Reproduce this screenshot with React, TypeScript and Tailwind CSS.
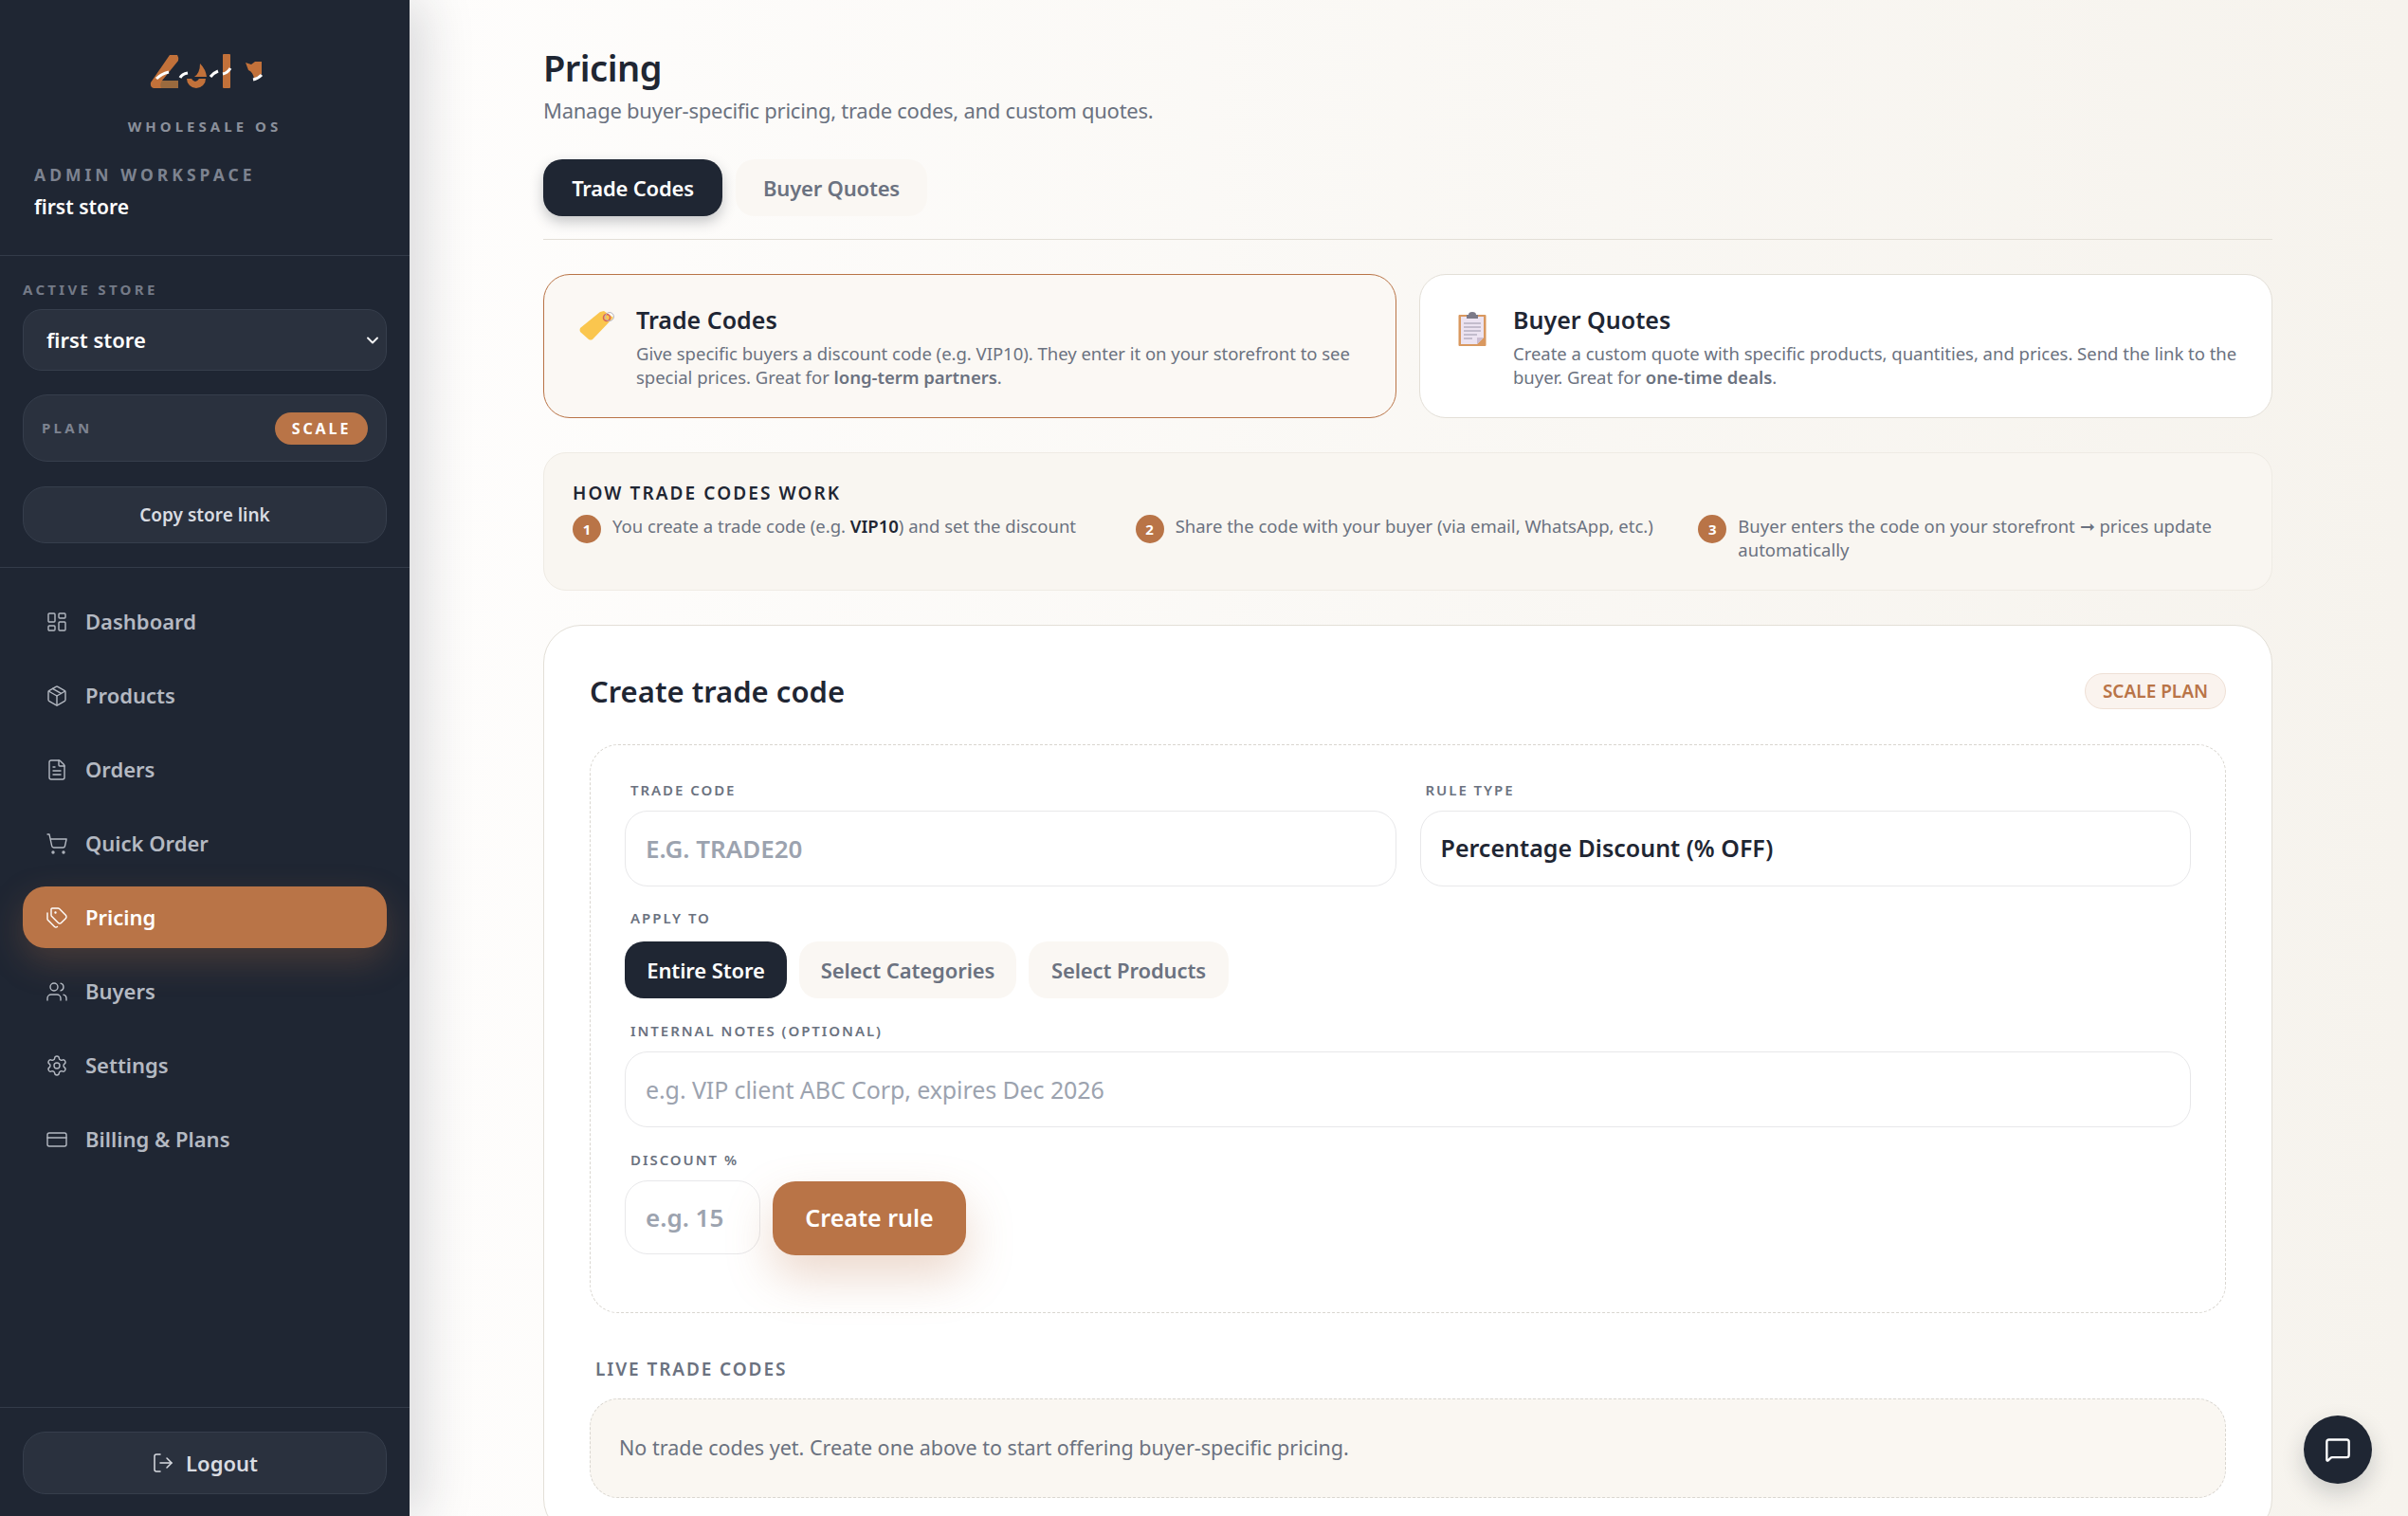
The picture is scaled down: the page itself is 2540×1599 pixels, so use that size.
import React from "react";
import {
  ChevronDown,
  CreditCard,
  FileText,
  LayoutDashboard,
  LogOut,
  MessageSquare,
  Package,
  Settings,
  ShoppingCart,
  Tags,
  Users,
} from "lucide-react";

const font = "font-['Noto_Sans','Open_Sans',sans-serif]";

const navItems = [
  { label: "Dashboard", icon: LayoutDashboard },
  { label: "Products", icon: Package },
  { label: "Orders", icon: FileText },
  { label: "Quick Order", icon: ShoppingCart },
  { label: "Pricing", icon: Tags, active: true },
  { label: "Buyers", icon: Users },
  { label: "Settings", icon: Settings },
  { label: "Billing & Plans", icon: CreditCard },
];

const Logo = () => (
  <svg width="170" height="70" viewBox="0 0 170 70" className="mt-[39px]">
    <path
      d="M47 19 L55 19 Q57 22 56 25 L39 46 L56 46 L56 54 L30 54 Q26 53 27 48 Z"
      fill="#c2713a"
    />
    <path d="M39 46 L56 46 L56 54 L38 54 Q36 50 39 46 Z" fill="#9a6a3e" />
    <path d="M33 44 Q38 39 46 37" stroke="#fff" strokeWidth="3" fill="none" />
    <path d="M58 43 Q60 39 66 38" stroke="#fff" strokeWidth="3" fill="none" />
    <path
      d="M65 44 A10 10 0 0 0 85 44 L78 44 Q74 50 70 44 Z M73 42 Q79 38 79 28 Q85 34 86 42 Z"
      fill="#c2713a"
    />
    <path d="M90 42 Q93 38 98 36" stroke="#fff" strokeWidth="3" fill="none" />
    <rect x="103" y="18" width="8" height="36" rx="1" fill="#c2713a" />
    <path d="M103 39 Q108 38 111 33" stroke="#fff" strokeWidth="3" fill="none" />
    <path
      d="M127 27 L133 29 L137 26 L144 26 L144 39 L136 44 Q135 37 130 35 Z"
      fill="#c2713a"
    />
    <path d="M135 45 Q140 44 144 40" stroke="#fff" strokeWidth="3" fill="none" />
  </svg>
);

const TagEmoji = () => (
  <svg width="40" height="32" viewBox="0 0 40 32" className="shrink-0 mt-[-2px]">
    <path
      d="M26 1 L36 8 L14 31 Q12 32 10 31 L1 23 Q0 21 1 19 L22 2 Z"
      fill="#fac64e"
    />
    <circle cx="29" cy="8" r="3.5" fill="none" stroke="#d4605f" strokeWidth="1.5" />
    <circle cx="32" cy="7" r="4.5" fill="none" stroke="#b8b8c4" strokeWidth="1" />
  </svg>
);

const ClipboardEmoji = () => (
  <svg width="30" height="36" viewBox="0 0 30 36" className="shrink-0">
    <rect x="0.5" y="3" width="29" height="33" rx="1" fill="#d9985f" />
    <path d="M3 5 H27 V27 L20 34 H3 Z" fill="#ece3f1" />
    <path d="M20 34 L27 27 H20 Z" fill="#cbbdd2" />
    <path d="M11 3 Q11 0 15 0 Q19 0 19 3 L21 3 L21 7 L9 7 L9 3 Z" fill="#7c7a88" />
    <path
      d="M6 12 H24 M6 16 H24 M6 20 H24 M6 24 H20 M6 28 H15"
      stroke="#9a95a8"
      strokeWidth="1"
    />
  </svg>
);

const Label = ({ children, className = "" }: { children: React.ReactNode; className?: string }) => (
  <div
    className={`h-[20px] pl-[6px] text-[15px] leading-[20px] font-semibold tracking-[0.13em] text-[#6b7280] ${className}`}
  >
    {children}
  </div>
);

const Step = ({ n, children }: { n: number; children: React.ReactNode }) => (
  <div className="flex items-start gap-[12px]">
    <span className="flex h-[30px] w-[30px] shrink-0 items-center justify-center rounded-full bg-[#b97447] text-[15px] font-bold text-white">
      {n}
    </span>
    <p className="text-[18.5px] leading-[24.5px] text-[#6b7280]">{children}</p>
  </div>
);

const Sidebar = () => (
  <aside className="relative z-10 flex h-full w-[432px] shrink-0 flex-col bg-[#1f2633] shadow-[14px_0_50px_rgba(31,38,51,0.17)]">
    <div className="h-[270px] shrink-0 border-b border-[#333b49]">
      <div className="flex flex-col items-center">
        <div className="h-[123px] pl-[2px]">
          <Logo />
        </div>
        <div className="text-[15px] leading-[20px] font-bold tracking-[0.27em] text-[#8b909b]">
          WHOLESALE OS
        </div>
      </div>
      <div className="mt-[30px] pl-[36px] text-[17.5px] leading-[22px] font-bold tracking-[0.23em] text-[#7d8390]">
        ADMIN WORKSPACE
      </div>
      <div className="mt-[11px] pl-[36px] text-[21px] leading-[24px] font-semibold text-white">
        first store
      </div>
    </div>
    <div className="h-[329px] shrink-0 border-b border-[#333b49] px-[24px] pt-[25px]">
      <div className="text-[15px] leading-[20px] font-bold tracking-[0.22em] text-[#747a87]">
        ACTIVE STORE
      </div>
      <div className="mt-[11px] flex h-[65px] items-center justify-between rounded-[20px] border border-[#363e4c] bg-[#2a313e] pr-[4px] pl-[24px]">
        <span className="text-[22px] font-semibold text-white">first store</span>
        <ChevronDown size={20} strokeWidth={2.2} className="text-white" />
      </div>
      <div className="mt-[25px] flex h-[71px] items-center justify-between rounded-[26px] border border-[#363e4c] bg-[#2a313e] pr-[19px] pl-[19px]">
        <span className="text-[15px] font-bold tracking-[0.22em] text-[#7d8390]">PLAN</span>
        <span className="flex h-[34px] w-[98px] items-center justify-center rounded-full bg-[#b97447] text-[16px] font-bold tracking-[0.18em] text-white">
          SCALE
        </span>
      </div>
      <div className="mt-[26px] flex h-[60px] items-center justify-center rounded-[24px] border border-[#363e4c] bg-[#2a313e] text-[19px] font-semibold text-[#d9dce2]">
        Copy store link
      </div>
    </div>
    <nav className="flex flex-1 flex-col gap-[13px] px-[24px] pt-[24px]">
      {navItems.map((item) => (
        <div
          key={item.label}
          className={
            item.active
              ? "flex h-[65px] items-center gap-[18px] rounded-[24px] bg-[#b97447] px-[24px] text-[22px] font-semibold text-white shadow-[0_14px_36px_rgba(185,116,71,0.26)]"
              : "flex h-[65px] items-center gap-[18px] rounded-[24px] px-[24px] text-[22px] font-semibold text-[#b4b9c2]"
          }
        >
          <item.icon size={24} strokeWidth={1.4} />
          {item.label}
        </div>
      ))}
    </nav>
    <div className="h-[115px] shrink-0 border-t border-[#333b49] px-[24px] pt-[25px]">
      <div className="flex h-[66px] items-center justify-center gap-[12px] rounded-[24px] border border-[#363e4c] bg-[#2a313e] text-[22px] font-semibold text-[#d9dce2]">
        <LogOut size={24} strokeWidth={1.5} />
        Logout
      </div>
    </div>
  </aside>
);

const ModeCard = ({
  icon,
  title,
  active,
  children,
}: {
  icon: React.ReactNode;
  title: string;
  active?: boolean;
  children: React.ReactNode;
}) => (
  <div
    className={
      active
        ? "flex h-[152px] gap-[24px] rounded-[28px] border border-[#b97447] bg-[#fbf8f4] pt-[31px] pr-[30px] pl-[37px]"
        : "flex h-[152px] gap-[22px] rounded-[28px] border border-[#e3dfd7] bg-white pt-[31px] pr-[24px] pl-[40px]"
    }
  >
    <div className="w-[36px] shrink-0 pt-[8px]">{icon}</div>
    <div>
      <div className="text-[25px] leading-[32px] font-semibold text-[#1f2633]">{title}</div>
      <p className="mt-[8px] text-[18.5px] leading-[24.5px] tracking-[-0.02px] text-[#6b7280]">{children}</p>
    </div>
  </div>
);

const inputCls =
  "h-[80px] w-full rounded-[24px] border border-[#e8e8ea] bg-white px-[21px] text-[26px] outline-none";

export default function App() {
  return (
    <div className={`flex h-[1599px] w-full overflow-hidden ${font}`}>
      <Sidebar />
      <main className="flex-1 overflow-hidden bg-gradient-to-r from-[#fefdfc] to-[#f6f3ed] pr-[143px] pl-[141px]">
        <h1 className="mt-[48px] h-[46px] text-[38px] leading-[46px] font-semibold tracking-[-0.5px] text-[#1f2633]">
          Pricing
        </h1>
        <p className="mt-[7px] text-[22px] leading-[30px] tracking-[-0.26px] text-[#6b7280]">
          Manage buyer-specific pricing, trade codes, and custom quotes.
        </p>

        <div className="mt-[37px] flex gap-[14px] border-b border-[#e3dfd7] pb-[24px]">
          <button className="h-[60px] w-[189px] rounded-[20px] bg-[#1f2633] text-[22px] font-semibold tracking-[-0.2px] text-white shadow-[0_6px_14px_rgba(31,38,51,0.25)]">
            Trade Codes
          </button>
          <button className="h-[60px] w-[202px] rounded-[20px] bg-[#faf7f3] text-[22px] font-semibold tracking-[-0.2px] text-[#6b7280]">
            Buyer Quotes
          </button>
        </div>

        <div className="mt-[36px] grid grid-cols-2 gap-[24px]">
          <ModeCard icon={<TagEmoji />} title="Trade Codes" active>
            Give specific buyers a discount code (e.g. VIP10). They enter it on your storefront to see
            special prices. Great for <b className="font-semibold">long-term partners</b>.
          </ModeCard>
          <ModeCard icon={<ClipboardEmoji />} title="Buyer Quotes">
            Create a custom quote with specific products, quantities, and prices. Send the link to the
            buyer. Great for <b className="font-semibold">one-time deals</b>.
          </ModeCard>
        </div>

        <section className="mt-[36px] h-[146px] rounded-[24px] border border-[#efebe4] bg-[#f9f6f1] px-[30px] pt-[29px]">
          <h3 className="text-[19px] leading-[26px] font-semibold tracking-[0.11em] text-[#1f2633]">
            HOW TRADE CODES WORK
          </h3>
          <div className="mt-[10px] grid grid-cols-3 gap-[19px]">
            <Step n={1}>
              You create a trade code (e.g. <b className="font-semibold text-[#1f2633]">VIP10</b>) and set the
              discount
            </Step>
            <Step n={2}>Share the code with your buyer (via email, WhatsApp, etc.)</Step>
            <Step n={3}>Buyer enters the code on your storefront ➞ prices update automatically</Step>
          </div>
        </section>

        <section className="mt-[36px] rounded-[40px] border border-[#e3dfd7] bg-white px-[48px] pt-[50px] pb-[40px]">
          <div className="flex h-[38px] items-center justify-between">
            <h2 className="text-[31px] font-semibold text-[#1f2633]">Create trade code</h2>
            <span className="flex h-[38px] w-[149px] items-center justify-center rounded-full border border-[#efe0d6] bg-[#faf3ee] text-[19px] font-semibold text-[#b97447]">
              SCALE PLAN
            </span>
          </div>

          <div className="mt-[37px] h-[600px] rounded-[30px] border border-dashed border-[#d9d6d0] px-[36px] pt-[37px]">
            <div className="grid grid-cols-2 gap-[25px]">
              <div>
                <Label className="mb-[12px]">TRADE CODE</Label>
                <input
                  readOnly
                  placeholder="E.G. TRADE20"
                  className={`${inputCls} font-semibold placeholder:text-[#9ca3af]`}
                />
              </div>
              <div>
                <Label className="mb-[12px]">RULE TYPE</Label>
                <div className={`${inputCls} flex items-center !text-[25px] font-semibold text-[#1f2633]`}>
                  Percentage Discount (% OFF)
                </div>
              </div>
            </div>

            <Label className="mt-[23px] mb-[15px]">APPLY TO</Label>
            <div className="flex gap-[13px]">
              <button className="h-[60px] w-[171px] rounded-[20px] bg-[#1f2633] text-[22px] font-semibold tracking-[-0.1px] text-white">
                Entire Store
              </button>
              <button className="h-[60px] w-[229px] rounded-[20px] bg-[#faf7f3] text-[22px] font-semibold tracking-[-0.1px] text-[#6b7280]">
                Select Categories
              </button>
              <button className="h-[60px] w-[211px] rounded-[20px] bg-[#faf7f3] text-[22px] font-semibold tracking-[-0.1px] text-[#6b7280]">
                Select Products
              </button>
            </div>

            <Label className="mt-[24px] mb-[12px]">INTERNAL NOTES (OPTIONAL)</Label>
            <input
              readOnly
              placeholder="e.g. VIP client ABC Corp, expires Dec 2026"
              className={`${inputCls} !text-[25px] tracking-[-0.1px] placeholder:text-[#9ca3af]`}
            />

            <Label className="mt-[24px] mb-[12px]">DISCOUNT %</Label>
            <div className="flex items-start gap-[13px]">
              <input
                readOnly
                placeholder="e.g. 15"
                className={`${inputCls} !h-[78px] !w-[143px] font-semibold placeholder:text-[#9ca3af]`}
              />
              <button className="mt-[1px] h-[78px] w-[204px] rounded-[24px] bg-[#b97447] text-[25px] font-semibold text-white shadow-[0_22px_50px_rgba(185,116,71,0.28)]">
                Create rule
              </button>
            </div>
          </div>

          <div className="mt-[46px] pl-[6px] text-[19px] leading-[26px] font-semibold tracking-[0.1em] text-[#6b7280]">
            LIVE TRADE CODES
          </div>
          <div className="mt-[18px] flex h-[105px] items-center rounded-[30px] border border-dashed border-[#d9d6d0] bg-[#faf7f2] pl-[30px] text-[21.5px] text-[#6b7280]">
            No trade codes yet. Create one above to start offering buyer-specific pricing.
          </div>
        </section>
      </main>

      <button className="fixed right-[38px] bottom-[34px] flex h-[72px] w-[72px] items-center justify-center rounded-full bg-[#1f2633] text-white shadow-[0_10px_24px_rgba(31,38,51,0.2)]">
        <MessageSquare size={28} strokeWidth={2} />
      </button>
    </div>
  );
}
